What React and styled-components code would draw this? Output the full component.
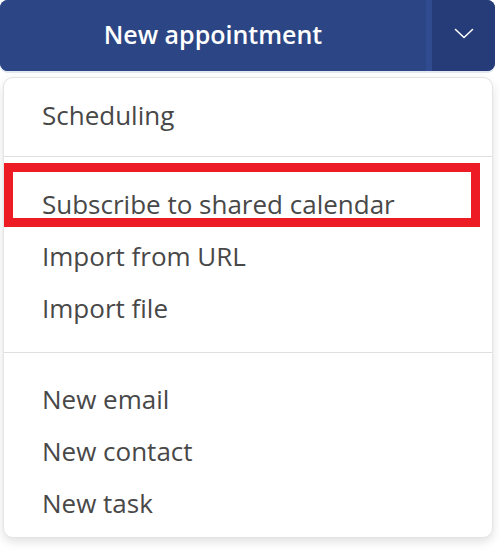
import React from "react";
import styled, { createGlobalStyle } from "styled-components";

const Global = createGlobalStyle`
  html, body { margin: 0; padding: 0; background: #ffffff; }
  body { font-family: "Open Sans", "Noto Sans", sans-serif; }
`;

const Page = styled.div`
  position: relative;
  width: 500px;
  height: 550px;
  overflow: hidden;
`;

const SplitButton = styled.div`
  display: flex;
  width: 495px;
  height: 71px;
  border-radius: 8px;
  overflow: hidden;
  background: #2c4685;
  box-shadow: 0 2px 0 #e2e7f1;
`;

const MainAction = styled.button`
  flex: 1;
  border: none;
  background: #2c4685;
  color: #ffffff;
  font-family: inherit;
  font-size: 25px;
  font-weight: 600;
  padding: 0 0 4px;
  display: flex;
  align-items: center;
  justify-content: center;
  border-right: 6px solid #304b90;
`;

const Toggle = styled.button`
  width: 63px;
  border: none;
  background: #253c78;
  display: flex;
  align-items: center;
  justify-content: center;
  padding: 0 0 4px;
`;

const Menu = styled.div`
  margin: 6px 0 0 3px;
  width: 488px;
  border: 1px solid #e4e4e4;
  border-radius: 10px;
  background: #ffffff;
  box-shadow: 0 4px 10px rgba(0, 0, 0, 0.12);
  padding: 11px 0 8px;
`;

const Item = styled.div`
  height: 52px;
  display: flex;
  align-items: center;
  padding-left: 38px;
  font-size: 26px;
  color: #484848;
`;

const Divider = styled.div`
  height: 1px;
  background: #e0e0e0;
  margin: ${(p) => p.$top}px 0 ${(p) => p.$bottom}px;
`;

const Highlight = styled.div`
  position: absolute;
  left: 4px;
  top: 163px;
  width: 476px;
  height: 64px;
  box-sizing: border-box;
  border: 9px solid #ed1c24;
  pointer-events: none;
`;

const Chevron = () => (
  <svg width="20" height="11" viewBox="0 0 20 11" fill="none">
    <path d="M1.5 1.5 L10 9.5 L18.5 1.5" stroke="#ffffff" strokeWidth="1.6" strokeLinecap="round" strokeLinejoin="round" />
  </svg>
);

export default function App() {
  return (
    <Page>
      <Global />
      <SplitButton>
        <MainAction>New appointment</MainAction>
        <Toggle aria-label="More options">
          <Chevron />
        </Toggle>
      </SplitButton>
      <Menu>
        <Item>Scheduling</Item>
        <Divider $top={15} $bottom={21} />
        <Item>Subscribe to shared calendar</Item>
        <Item>Import from URL</Item>
        <Item>Import file</Item>
        <Divider $top={18} $bottom={20} />
        <Item>New email</Item>
        <Item>New contact</Item>
        <Item>New task</Item>
      </Menu>
      <Highlight />
    </Page>
  );
}
